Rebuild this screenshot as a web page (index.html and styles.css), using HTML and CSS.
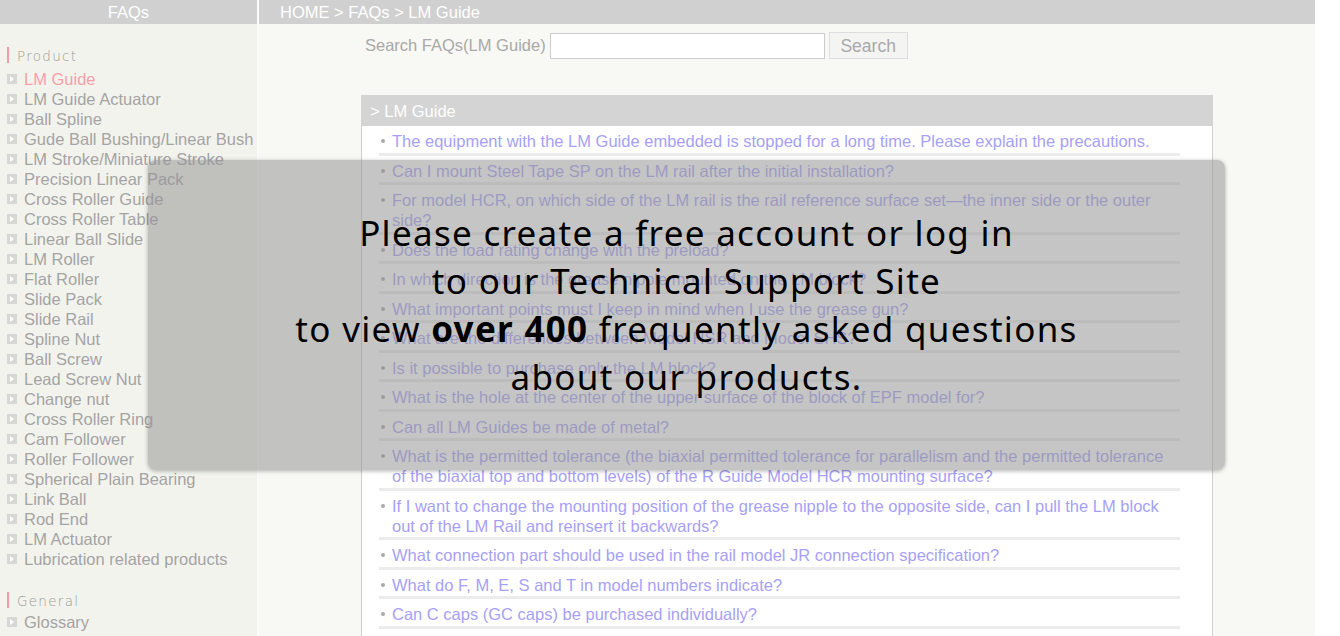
FILE: index.html
```html
<!DOCTYPE html>
<html lang="en">
<head>
<meta charset="utf-8">
<title>FAQs - LM Guide</title>
<link rel="stylesheet" href="styles.css">
</head>
<body>
<div class="page">
  <aside class="sidebar">
    <div class="side-head">FAQs</div>
    <div class="cat">
      <div class="cat-label">Product</div>
      <ul class="cat-list">
        <li class="active"><span class="ico"></span>LM Guide</li>
        <li><span class="ico"></span>LM Guide Actuator</li>
        <li><span class="ico"></span>Ball Spline</li>
        <li><span class="ico"></span>Gude Ball Bushing/Linear Bush</li>
        <li><span class="ico"></span>LM Stroke/Miniature Stroke</li>
        <li><span class="ico"></span>Precision Linear Pack</li>
        <li><span class="ico"></span>Cross Roller Guide</li>
        <li><span class="ico"></span>Cross Roller Table</li>
        <li><span class="ico"></span>Linear Ball Slide</li>
        <li><span class="ico"></span>LM Roller</li>
        <li><span class="ico"></span>Flat Roller</li>
        <li><span class="ico"></span>Slide Pack</li>
        <li><span class="ico"></span>Slide Rail</li>
        <li><span class="ico"></span>Spline Nut</li>
        <li><span class="ico"></span>Ball Screw</li>
        <li><span class="ico"></span>Lead Screw Nut</li>
        <li><span class="ico"></span>Change nut</li>
        <li><span class="ico"></span>Cross Roller Ring</li>
        <li><span class="ico"></span>Cam Follower</li>
        <li><span class="ico"></span>Roller Follower</li>
        <li><span class="ico"></span>Spherical Plain Bearing</li>
        <li><span class="ico"></span>Link Ball</li>
        <li><span class="ico"></span>Rod End</li>
        <li><span class="ico"></span>LM Actuator</li>
        <li><span class="ico"></span>Lubrication related products</li>
      </ul>
    </div>
    <div class="cat cat-general">
      <div class="cat-label">General</div>
      <ul class="cat-list cat-list-general">
        <li><span class="ico"></span>Glossary</li>
      </ul>
    </div>
  </aside>
  <main class="main">
    <div class="crumb">HOME &gt; FAQs &gt; LM Guide</div>
    <form class="search">
      <label class="search-label">Search FAQs(LM Guide)</label>
      <input class="search-input" type="text">
      <button class="search-btn" type="button">Search</button>
    </form>
    <section class="panel">
      <div class="panel-head">&gt; LM Guide</div>
      <ul class="faq">
        <li>The equipment with the LM Guide embedded is stopped for a long time. Please explain the precautions.</li>
        <li>Can I mount Steel Tape SP on the LM rail after the initial installation?</li>
        <li>For model HCR, on which side of the LM rail is the rail reference surface set—the inner side or the outer side?</li>
        <li>Does the load rating change with the preload?</li>
        <li>In which direction is the grease nipple mounted on the LM block?</li>
        <li>What important points must I keep in mind when I use the grease gun?</li>
        <li>What are the differences between Model HSR and Model SHS?</li>
        <li>Is it possible to purchase only the LM block?</li>
        <li>What is the hole at the center of the upper surface of the block of EPF model for?</li>
        <li>Can all LM Guides be made of metal?</li>
        <li>What is the permitted tolerance (the biaxial permitted tolerance for parallelism and the permitted tolerance of the biaxial top and bottom levels) of the R Guide Model HCR mounting surface?</li>
        <li>If I want to change the mounting position of the grease nipple to the opposite side, can I pull the LM block out of the LM Rail and reinsert it backwards?</li>
        <li>What connection part should be used in the rail model JR connection specification?</li>
        <li>What do F, M, E, S and T in model numbers indicate?</li>
        <li>Can C caps (GC caps) be purchased individually?</li>
      </ul>
    </section>
  </main>
  <div class="overlay">
    <p>Please create a free account or log in<br>to our Technical Support Site<br>to view <b>over 400</b> frequently asked questions<br>about our products.</p>
  </div>
</div>
</body>
</html>
```

FILE: styles.css
```css
html, body {
  margin: 0;
  padding: 0;
  background: #ffffff;
}
body {
  font-family: "Liberation Sans", Arial, sans-serif;
  font-size: 16.5px;
  overflow: hidden;
  height: 636px;
}
.page {
  position: relative;
  width: 1315px;
  height: 636px;
  display: flex;
  overflow: hidden;
}
.sidebar {
  width: 257px;
  flex: none;
  background: #f3f3ee;
  border-right: 2px solid #fbfbf9;
}
.side-head {
  height: 24px;
  line-height: 25px;
  background: #d0d0d0;
  color: #ffffff;
  text-align: center;
}
.cat {
  margin-top: 23px;
}
.cat-general {
  margin-top: 23px;
}
.cat-label {
  margin-left: 7px;
  border-left: 2px solid #f39cab;
  padding-left: 8px;
  height: 16px;
  line-height: 19px;
  font-family: "DejaVu Sans", sans-serif;
  font-size: 13.5px;
  letter-spacing: 1.3px;
  color: #9a9a9a;
  font-weight: 300;
}
.cat-list {
  list-style: none;
  margin: 6px 0 0;
  padding: 0;
}
.cat-list-general {
  margin-top: 4px;
}
.cat-list li {
  display: flex;
  align-items: center;
  height: 20px;
  line-height: 20px;
  padding-left: 7px;
  color: #a4a4a4;
  white-space: nowrap;
}
.cat-list li.active {
  color: #f6a0a8;
}
.ico {
  position: relative;
  width: 10px;
  height: 10px;
  background: #d7d7d5;
  margin-right: 7px;
  flex: none;
}
.ico::after {
  content: "";
  position: absolute;
  left: 3px;
  top: 2px;
  border-left: 4px solid #ffffff;
  border-top: 3px solid transparent;
  border-bottom: 3px solid transparent;
}
.main {
  flex: 1;
  background: #f8f8f4;
}
.crumb {
  height: 24px;
  line-height: 25px;
  background: #d0d0d0;
  color: #ffffff;
  padding-left: 21px;
}
.search {
  display: flex;
  align-items: center;
  margin: 8px 0 0 106px;
  height: 27px;
}
.search-label {
  color: #a9a9a9;
  margin-right: 4px;
}
.search-input {
  width: 271px;
  height: 22px;
  border: 1px solid #cccccc;
  background: #ffffff;
  padding: 1px;
  margin: 0 4px 0 0;
}
.search-btn {
  width: 79px;
  height: 27px;
  background: #f4f4f2;
  border: 1px solid #dddddd;
  color: #a9a9a9;
  font-family: "Liberation Sans", Arial, sans-serif;
  font-size: 17.5px;
  padding: 2px 0 0;
  margin: 0;
}
.panel {
  margin: 36px 0 0 102px;
  width: 852px;
}
.panel-head {
  height: 31px;
  line-height: 33px;
  background: #d4d4d4;
  color: #ffffff;
  padding-left: 9px;
}
.faq {
  list-style: none;
  margin: 0;
  padding: 0 32px 10px 17px;
  background: #ffffff;
  border-left: 1px solid #cfcfcf;
  border-right: 1px solid #cfcfcf;
}
.faq li {
  position: relative;
  padding: 5px 0 1.5px 13px;
  line-height: 20px;
  border-bottom: 3px solid #ececec;
  color: #a79ff6;
}
.faq li::before {
  content: "";
  position: absolute;
  left: 2px;
  top: 13px;
  width: 4px;
  height: 4px;
  border-radius: 50%;
  background: #a8a8a8;
}
.overlay {
  position: absolute;
  left: 148px;
  top: 160px;
  width: 1077px;
  height: 310px;
  border-radius: 8px;
  background: rgba(150, 150, 150, 0.55);
  box-shadow: 0 1px 4px rgba(0, 0, 0, 0.3);
  text-align: center;
}
.overlay p {
  margin: 0;
  padding-top: 49px;
  font-family: "Noto Sans", "Open Sans", sans-serif;
  font-size: 35px;
  letter-spacing: 1.3px;
  line-height: 48px;
  color: #000000;
}
.overlay b {
  font-weight: 700;
}
```
